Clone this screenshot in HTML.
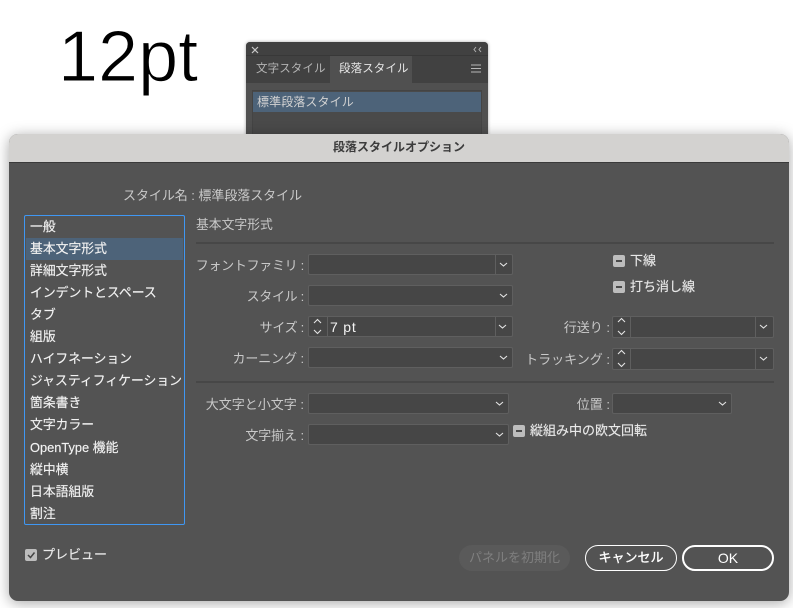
<!DOCTYPE html>
<html lang="ja"><head><meta charset="utf-8"><style>
html,body{margin:0;padding:0;background:#fff}
#p{position:relative;width:793px;height:608px;overflow:hidden;background:#fff;font-family:"Liberation Sans","Noto Sans CJK JP",sans-serif}
#p div,#p svg{position:absolute}
.t{white-space:nowrap;font-size:13px;line-height:20px;height:20px;color:#d6d6d6}
.l{right:489px;text-align:right;color:#c9c9c9;font-size:13px}
.k{letter-spacing:-.3px}
.f{background:#464646;border:1px solid #5f5f5f;border-radius:2px;box-sizing:border-box}
.v{top:0;bottom:0;width:1px;background:#5f5f5f}
.h{left:196px;width:578px;height:2px;background:#474747}
.i{left:30px;color:#f2f2f2;font-size:12.830px;-webkit-text-stroke:.15px #f2f2f2}
.c{width:12px;height:12px;border-radius:2px;background:#bdbdbd}
.c i{position:absolute;left:3px;top:5px;width:6px;height:2px;background:#4a4a4a}
.b{box-sizing:border-box;height:26px;border-radius:13px;text-align:center;line-height:24px;font-size:13px;color:#fff;border:1px solid #fff}
</style></head><body><div id="p">
<div class="t" style="left:58px;top:15px;height:84px;line-height:84px;font-size:72px;color:#000;-webkit-text-stroke:1px #fff">12pt</div>

<div style="left:246px;top:42px;width:242px;height:100px;background:#505050;border-radius:4px 4px 0 0;box-shadow:0 0 3px rgba(0,0,0,.35)">
 <div style="left:0;top:0;width:242px;height:41px;background:#414141;border-radius:4px 4px 0 0"></div>
 <div style="left:84px;top:13px;width:82px;height:28px;background:#505050"></div>
 <div style="left:0;top:13px;width:242px;height:1px;background:#383838"></div>
 <div class="t" style="left:10px;top:17px;font-size:11.500px;line-height:20px;color:#b4b4b4;letter-spacing:.1px">文字スタイル</div>
 <div class="t" style="left:93px;top:17px;font-size:11.500px;line-height:20px;color:#e6e6e6;letter-spacing:.1px">段落スタイル</div>
 <svg style="left:224px;top:21px" width="12" height="12"><path d="M1 2h10M1 5.500h10M1 9h10" stroke="#b8b8b8" stroke-width="1"/></svg>
 <svg style="left:4px;top:3px" width="10" height="10"><path d="M2 2l6 6M8 2l-6 6" stroke="#c8c8c8" stroke-width="1.200"/></svg>
 <svg style="left:226px;top:3px" width="12" height="9"><path d="M4 2L2 4.500 4 7M9 2L7 4.500 9 7" stroke="#b0b0b0" fill="none"/></svg>
 <div style="left:6px;top:48px;width:230px;height:50px;background:#4a4a4a;border:1px solid #444;box-sizing:border-box"></div>
 <div style="left:7px;top:50px;width:228px;height:20px;background:#4d6379"></div>
 <div class="t" style="left:11px;top:50px;font-size:12px;color:#d2d2d2;letter-spacing:.1px">標準段落スタイル</div>
</div>

<div style="left:9px;top:134px;width:780px;height:467px;background:#535353;border-radius:9px;box-shadow:0 2px 14px rgba(0,0,0,.35);overflow:hidden">
 <div style="left:0;top:0;width:780px;height:28px;background:#d3d2d0;border-bottom:1px solid #3a3a3a"></div>
 <div class="t" style="left:0;width:780px;text-align:center;top:3px;color:#3c3c3c;font-weight:bold;font-size:12px;line-height:20px">段落スタイルオプション</div>
</div>

<div class="t" style="left:123px;top:186px;color:#c9c9c9;font-size:13px;letter-spacing:-.05px">スタイル名 : 標準段落スタイル</div>

<div style="left:24px;top:215px;width:161px;height:310px;border:1px solid #3f97f3;box-sizing:border-box;border-radius:2px"></div>
<div style="left:26px;top:238px;width:157px;height:22px;background:#4d6379"></div>
<div class="t i" style="top:217px">一般</div>
<div class="t i" style="top:239px">基本文字形式</div>
<div class="t i" style="top:261px">詳細文字形式</div>
<div class="t i" style="top:283px">インデントとスペース</div>
<div class="t i" style="top:305px">タブ</div>
<div class="t i" style="top:327px">組版</div>
<div class="t i" style="top:349px">ハイフネーション</div>
<div class="t i" style="top:371px">ジャスティフィケーション</div>
<div class="t i" style="top:393px">箇条書き</div>
<div class="t i" style="top:415px">文字カラー</div>
<div class="t i" style="top:438px">OpenType 機能</div>
<div class="t i" style="top:460px">縦中横</div>
<div class="t i" style="top:482px">日本語組版</div>
<div class="t i" style="top:504px">割注</div>

<div class="t" style="left:196px;top:215px;font-size:12.800px;color:#c9c9c9">基本文字形式</div>
<div class="h" style="top:242px"></div>
<div class="h" style="top:381px"></div>

<div class="t l k" style="top:256px">フォントファミリ :</div>
<div class="t l k" style="top:287px">スタイル :</div>
<div class="t l k" style="top:318px">サイズ :</div>
<div class="t l k" style="top:349px;letter-spacing:-.1px">カーニング :</div>
<div class="t l" style="top:395px">大文字と小文字 :</div>
<div class="t l k" style="top:426px;letter-spacing:-.1px">文字揃え :</div>

<div class="f" style="left:308px;top:254px;width:205px;height:21px"><div class="v" style="left:186px"></div></div>
<div class="f" style="left:308px;top:285px;width:205px;height:21px"></div>
<div class="f" style="left:308px;top:316px;width:205px;height:21px"><div class="v" style="left:18px"></div><div class="v" style="left:186px"></div></div>
<div class="f" style="left:308px;top:347px;width:205px;height:21px"></div>
<div class="f" style="left:308px;top:393px;width:201px;height:21px"></div>
<div class="f" style="left:308px;top:424px;width:201px;height:21px"></div>
<div class="t" style="left:330px;top:317px;color:#f4f4f4;font-size:14px;letter-spacing:.8px">7 pt</div>

<div class="t l" style="right:183px;top:318px">行送り :</div>
<div class="t l" style="right:183px;top:350px">トラッキング :</div>
<div class="t l" style="right:183px;top:395px">位置 :</div>
<div class="f" style="left:612px;top:316px;width:162px;height:22px"><div class="v" style="left:17px"></div><div class="v" style="left:142px"></div></div>
<div class="f" style="left:612px;top:348px;width:162px;height:22px"><div class="v" style="left:17px"></div><div class="v" style="left:142px"></div></div>
<div class="f" style="left:612px;top:393px;width:120px;height:21px"></div>

<svg style="left:0;top:0" width="793" height="608" fill="none" stroke="#e4e4e4" stroke-width="1.100">
 <path d="M500 263l3.500 3 3.500-3M500 294l3.500 3 3.500-3M499 325l3.500 3 3.500-3M500 356l3.500 3 3.500-3M496 402l3.500 3 3.500-3M496 433l3.500 3 3.500-3M760 325l3.500 3 3.500-3M760 357l3.500 3 3.500-3M719 402l3.500 3 3.500-3"/>
 <path d="M314 323l3.500-3.500 3.500 3.500M314 330l3.500 3.500 3.500-3.500M618 322l3.500-3.500 3.500 3.500M618 331l3.500 3.500 3.500-3.500M618 354l3.500-3.500 3.500 3.500M618 363l3.500 3.500 3.500-3.500"/>
</svg>

<div class="c" style="left:613px;top:255px"><i></i></div>
<div class="t" style="left:630px;top:251px;color:#e8e8e8;-webkit-text-stroke:.15px #e8e8e8">下線</div>
<div class="c" style="left:613px;top:281px"><i></i></div>
<div class="t" style="left:630px;top:277px;color:#e8e8e8;-webkit-text-stroke:.15px #e8e8e8">打ち消し線</div>
<div class="c" style="left:513px;top:425px"><i></i></div>
<div class="t" style="left:530px;top:421px;color:#e8e8e8;-webkit-text-stroke:.15px #e8e8e8">縦組み中の欧文回転</div>

<div class="c" style="left:25px;top:549px"></div>
<svg style="left:25px;top:549px" width="12" height="12"><path d="M3 6l2.500 2.500L9.500 3.500" stroke="#444" stroke-width="1.500" fill="none"/></svg>
<div class="t" style="left:42px;top:545px;color:#e8e8e8;-webkit-text-stroke:.15px #e8e8e8">プレビュー</div>

<div class="b" style="left:459px;top:545px;width:111px;background:#5a5a5a;border-color:#5a5a5a;color:#7f7f7f">パネルを初期化</div>
<div class="b" style="left:585px;top:545px;width:92px;-webkit-text-stroke:.3px #fff">キャンセル</div>
<div class="b" style="left:682px;top:545px;width:92px;border-width:2px;line-height:23px;font-size:14px">OK</div>
</div></body></html>
